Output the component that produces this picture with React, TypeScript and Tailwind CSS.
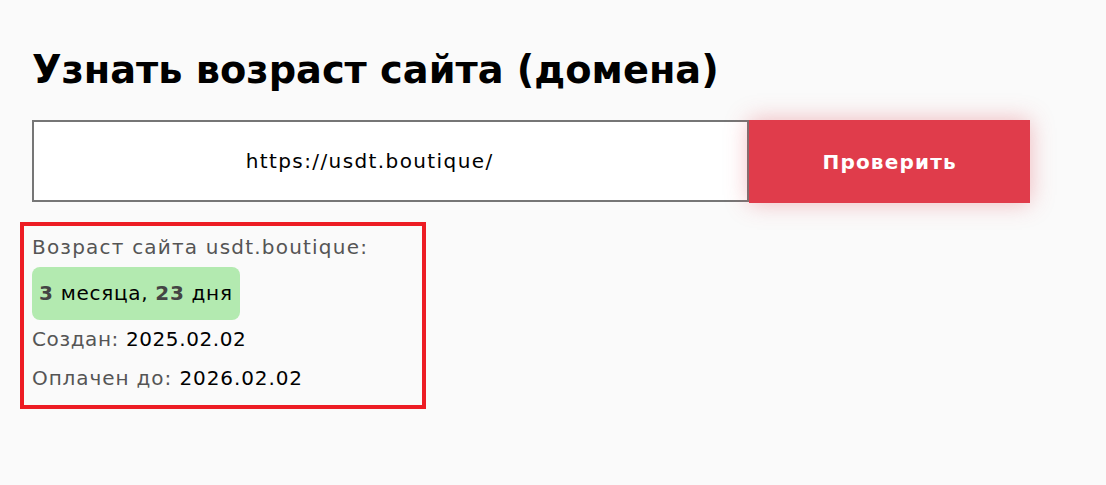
export default function App() {
  return (
    <div className="min-h-[485px] bg-[#fafafa] font-['DejaVu_Sans',sans-serif] text-black">
      <div className="px-8 pt-[42px]">
        <h1 className="text-[38.3px] font-bold leading-[56px]">
          Узнать возраст сайта (домена)
        </h1>
        <div className="mt-[22px] flex w-[998px] items-stretch">
          <div className="flex h-[82px] w-[718px] items-center justify-center border-2 border-[#767676] bg-white pr-[42px] text-[20px] tracking-[1.4px]">
            https://usdt.boutique/
          </div>
          <button className="h-[83px] w-[281px] bg-[#e03c4b] text-[20px] font-bold tracking-[1.2px] text-white shadow-[0_0_22px_rgba(224,60,75,0.35)]">
            Проверить
          </button>
        </div>
      </div>
      <div className="ml-5 mt-[19px] w-[406px] border-4 border-[#ed1c24] px-2 pb-[7px] pt-1 text-[20px]">
        <div className="leading-[34px] tracking-[1.2px] text-[#555]">Возраст сайта usdt.boutique:</div>
        <div className="mt-[3px] inline-block rounded-lg bg-[#b3eab0] px-[7px] py-[11px] leading-[31px] tracking-[0.7px]">
          <b className="text-[#444]">3</b> месяца, <b className="text-[#444]">23</b> дня
        </div>
        <div className="leading-[39px] tracking-[0.6px]">
          <span className="text-[#555]">Создан:</span> 2025.02.02
        </div>
        <div className="leading-[39px] tracking-[0.9px]">
          <span className="text-[#555]">Оплачен до:</span> 2026.02.02
        </div>
      </div>
    </div>
  )
}
